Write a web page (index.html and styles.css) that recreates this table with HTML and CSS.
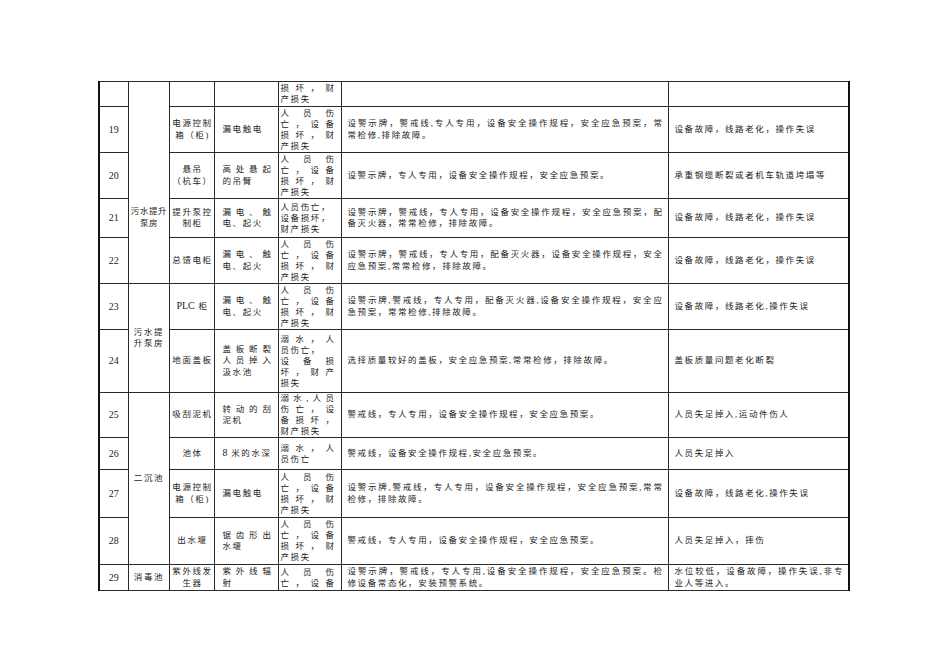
FILE: index.html
```html
<!DOCTYPE html>
<html lang="zh-CN">
<head>
<meta charset="utf-8">
<title>危险源辨识表</title>
<link rel="stylesheet" href="styles.css">
</head>
<body>
<table class="sheet">
  <colgroup>
    <col class="c-no"><col class="c-area"><col class="c-dev"><col class="c-haz"><col class="c-res"><col class="c-meas"><col class="c-cause">
  </colgroup>
  <tbody>
    <tr class="r25">
      <td class="no"></td>
      <td class="area first" rowspan="5"><div class="l">污水提升</div><div class="l">泵房</div></td>
      <td class="dev"></td>
      <td class="haz"></td>
      <td class="res"><div class="l j">损坏，财</div><div class="l">产损失</div></td>
      <td class="meas"></td>
      <td class="cause"></td>
    </tr>
    <tr class="r46">
      <td class="no">19</td>
      <td class="dev"><div class="l">电源控制</div><div class="l">箱（柜)</div></td>
      <td class="haz"><div class="l">漏电触电</div></td>
      <td class="res"><div class="l j">人员伤</div><div class="l j">亡，设备</div><div class="l j">损坏，财</div><div class="l">产损失</div></td>
      <td class="meas"><div class="l j">设警示牌，警戒线,专人专用，设备安全操作规程，安全应急预案，常</div><div class="l">常检修,排除故障。</div></td>
      <td class="cause"><div class="l">设备故障，线路老化，操作失误</div></td>
    </tr>
    <tr class="r46">
      <td class="no">20</td>
      <td class="dev"><div class="l">悬吊</div><div class="l">（杭车）</div></td>
      <td class="haz"><div class="l j">高处悬起</div><div class="l">的吊臂</div></td>
      <td class="res"><div class="l j">人员伤</div><div class="l j">亡，设备</div><div class="l j">损坏，财</div><div class="l">产损失</div></td>
      <td class="meas"><div class="l">设警示牌，专人专用，设备安全操作规程，安全应急预案。</div></td>
      <td class="cause"><div class="l">承重钢缆断裂或者机车轨道垮塌等</div></td>
    </tr>
    <tr class="r39">
      <td class="no">21</td>
      <td class="dev"><div class="l">提升泵控</div><div class="l">制柜</div></td>
      <td class="haz"><div class="l j">漏电、触</div><div class="l">电、起火</div></td>
      <td class="res"><div class="l">人员伤亡，</div><div class="l">设备损坏，</div><div class="l">财产损失</div></td>
      <td class="meas"><div class="l j">设警示牌，警戒线，专人专用，设备安全操作规程，安全应急预案，配</div><div class="l">备灭火器，常常检修，排除故障。</div></td>
      <td class="cause"><div class="l">设备故障，线路老化，操作失误</div></td>
    </tr>
    <tr class="r46">
      <td class="no">22</td>
      <td class="dev"><div class="l">总馈电柜</div></td>
      <td class="haz"><div class="l j">漏电、触</div><div class="l">电、起火</div></td>
      <td class="res"><div class="l j">人员伤</div><div class="l j">亡，设备</div><div class="l j">损坏，财</div><div class="l">产损失</div></td>
      <td class="meas"><div class="l j">设警示牌，警戒线，专人专用，配备灭火器，设备安全操作规程，安全</div><div class="l">应急预案,常常检修，排除故障。</div></td>
      <td class="cause"><div class="l">设备故障，线路老化，操作失误</div></td>
    </tr>
    <tr class="r46">
      <td class="no">23</td>
      <td class="area" rowspan="2"><div class="l">污水提</div><div class="l">升泵房</div></td>
      <td class="dev"><div class="l"><span class="lat">PLC</span> 柜</div></td>
      <td class="haz"><div class="l j">漏电、触</div><div class="l">电、起火</div></td>
      <td class="res"><div class="l j">人员伤</div><div class="l j">亡，设备</div><div class="l j">损坏，财</div><div class="l">产损失</div></td>
      <td class="meas"><div class="l j">设警示牌,警戒线，专人专用，配备灭火器,设备安全操作规程，安全应</div><div class="l">急预案，常常检修,排除故障。</div></td>
      <td class="cause"><div class="l">设备故障，线路老化,操作失误</div></td>
    </tr>
    <tr class="r63">
      <td class="no">24</td>
      <td class="dev"><div class="l">地面盖板</div></td>
      <td class="haz"><div class="l j">盖板断裂</div><div class="l j">人员掉入</div><div class="l">汲水池</div></td>
      <td class="res"><div class="l j">溺水，人</div><div class="l">员伤亡，</div><div class="l j">设备损</div><div class="l j">坏，财产</div><div class="l">损失</div></td>
      <td class="meas"><div class="l">选择质量较好的盖板，安全应急预案,常常检修，排除故障。</div></td>
      <td class="cause"><div class="l">盖板质量问题老化断裂</div></td>
    </tr>
    <tr class="r45">
      <td class="no">25</td>
      <td class="area" rowspan="4"><div class="l">二沉池</div></td>
      <td class="dev"><div class="l">吸刮泥机</div></td>
      <td class="haz"><div class="l j">转动的刮</div><div class="l">泥机</div></td>
      <td class="res"><div class="l j">溺水,人员</div><div class="l j">伤亡，设</div><div class="l j">备损坏，</div><div class="l">财产损失</div></td>
      <td class="meas"><div class="l">警戒线，专人专用，设备安全操作规程，安全应急预案。</div></td>
      <td class="cause"><div class="l">人员失足掉入,运动件伤人</div></td>
    </tr>
    <tr class="r32">
      <td class="no">26</td>
      <td class="dev"><div class="l">池体</div></td>
      <td class="haz"><div class="l"><span class="lat">8</span> 米的水深</div></td>
      <td class="res"><div class="l j">溺水，人</div><div class="l">员伤亡</div></td>
      <td class="meas"><div class="l">警戒线，设备安全操作规程,安全应急预案。</div></td>
      <td class="cause"><div class="l">人员失足掉入</div></td>
    </tr>
    <tr class="r48">
      <td class="no">27</td>
      <td class="dev"><div class="l">电源控制</div><div class="l">箱（柜)</div></td>
      <td class="haz"><div class="l">漏电触电</div></td>
      <td class="res"><div class="l j">人员伤</div><div class="l j">亡，设备</div><div class="l j">损坏，财</div><div class="l">产损失</div></td>
      <td class="meas"><div class="l j">设警示牌,警戒线，专人专用，设备安全操作规程，安全应急预案,常常</div><div class="l">检修，排除故障。</div></td>
      <td class="cause"><div class="l">设备故障，线路老化,操作失误</div></td>
    </tr>
    <tr class="r47">
      <td class="no">28</td>
      <td class="dev"><div class="l">出水堰</div></td>
      <td class="haz"><div class="l j">锯齿形出</div><div class="l">水堰</div></td>
      <td class="res"><div class="l j">人员伤</div><div class="l j">亡，设备</div><div class="l j">损坏，财</div><div class="l">产损失</div></td>
      <td class="meas"><div class="l">警戒线，专人专用，设备安全操作规程，安全应急预案。</div></td>
      <td class="cause"><div class="l">人员失足掉入，摔伤</div></td>
    </tr>
    <tr class="r26">
      <td class="no">29</td>
      <td class="area"><div class="l">消毒池</div></td>
      <td class="dev"><div class="l">紫外线发</div><div class="l">生器</div></td>
      <td class="haz"><div class="l j">紫外线辐</div><div class="l">射</div></td>
      <td class="res"><div class="l j">人员伤</div><div class="l j">亡，设备</div></td>
      <td class="meas"><div class="l j">设警示牌，警戒线，专人专用,设备安全操作规程，安全应急预案。检</div><div class="l">修设备常态化，安装预警系统。</div></td>
      <td class="cause"><div class="l j">水位较低，设备故障，操作失误,非专</div><div class="l">业人等进入。</div></td>
    </tr>
  </tbody>
</table>
</body>
</html>
```
FILE: styles.css
```css
html, body {
  margin: 0;
  padding: 0;
  background: #ffffff;
}

body {
  font-family: "Liberation Serif", "Noto Sans CJK SC", serif;
  color: #1c1c1c;
}

.sheet {
  margin: 81px 0 0 98px;
  border-collapse: collapse;
  table-layout: fixed;
  width: 752px;
  border-left: 2px solid #111;
  border-right: 2px solid #111;
}

.c-no { width: 29px; }
.c-area { width: 41px; }
.c-dev { width: 45px; }
.c-haz { width: 64px; }
.c-res { width: 63px; }
.c-meas { width: 327px; }
.c-cause { width: 181px; }

.sheet td {
  border: 1px solid #2a2a2a;
  padding: 0;
  vertical-align: middle;
  font-size: 8.5px;
  letter-spacing: 1.6px;
  line-height: 11.5px;
  overflow: hidden;
}

.sheet td:first-child {
  border-left: 2px solid #111;
}

.sheet td:last-child {
  border-right: 2px solid #111;
}

.r25 { height: 25px; }
.r26 { height: 26px; }
.r32 { height: 32px; }
.r39 { height: 39px; }
.r45 { height: 45px; }
.r46 { height: 46px; }
.r47 { height: 47px; }
.r48 { height: 48px; }
.r63 { height: 63px; }

.l {
  white-space: nowrap;
}

.j {
  text-align: justify;
  text-align-last: justify;
}

.lat {
  font-size: 10px;
  letter-spacing: 0;
}

.no {
  text-align: center;
  font-size: 10px !important;
  letter-spacing: 0 !important;
}

.area {
  text-align: center;
  padding: 0 0 0 1px !important;
}

.area.first {
  vertical-align: top !important;
  padding-top: 124px !important;
  letter-spacing: 0.6px !important;
}

.dev {
  text-align: center;
  padding: 0 0 0 2px !important;
}

.haz {
  padding: 0 5px 0 8px !important;
}

.res {
  padding: 0 5px 0 2px !important;
  line-height: 11px !important;
}

.meas {
  padding: 0 4px 0 6px !important;
}

.cause {
  padding: 0 4px 0 6px !important;
}
```
